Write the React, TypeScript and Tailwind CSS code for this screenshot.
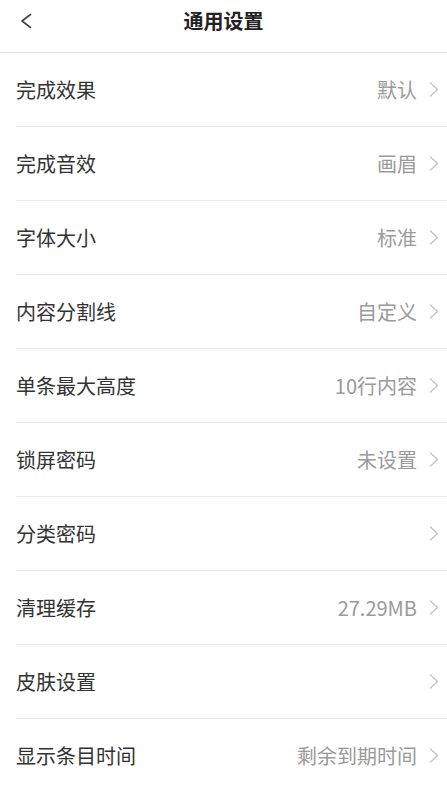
const rows: { label: string; value: string }[] = [
  { label: "完成效果", value: "默认" },
  { label: "完成音效", value: "画眉" },
  { label: "字体大小", value: "标准" },
  { label: "内容分割线", value: "自定义" },
  { label: "单条最大高度", value: "10行内容" },
  { label: "锁屏密码", value: "未设置" },
  { label: "分类密码", value: "" },
  { label: "清理缓存", value: "27.29MB" },
  { label: "皮肤设置", value: "" },
  { label: "显示条目时间", value: "剩余到期时间" },
];

function Chevron({ className }: { className?: string }) {
  return (
    <svg width="10" height="15" viewBox="0 0 10 15" fill="none" className={className}>
      <path d="M1.5 1L8.5 7.5L1.5 14" stroke="currentColor" strokeWidth="1.4" strokeLinecap="round" strokeLinejoin="round" />
    </svg>
  );
}

export default function App() {
  return (
    <div
      className="w-[447px] h-[787px] overflow-hidden bg-white text-[#333333]"
      style={{ fontFamily: '"Noto Sans CJK SC", "Noto Sans", sans-serif' }}
    >
      <header className="relative h-[53px] border-b border-[#e5e5e5] flex items-center justify-center">
        <button className="absolute left-[19px] top-[13px] text-[#444444]">
          <svg width="14" height="16" viewBox="0 0 14 16" fill="none">
            <path d="M11.5 1.5L3 8L11.5 14.5" stroke="currentColor" strokeWidth="1.6" strokeLinecap="round" strokeLinejoin="round" />
          </svg>
        </button>
        <h1 className="text-[20px] font-bold text-[#222222] -mt-[11px]">通用设置</h1>
      </header>
      <ul className="pl-[16px]">
        {rows.map((r) => (
          <li
            key={r.label}
            className="h-[74px] flex items-center justify-between pr-[8px] border-b border-[#ececec]"
          >
            <span className="text-[20px] leading-none">{r.label}</span>
            <span className="flex items-center gap-[12px]">
              {r.value && <span className="text-[20px] leading-none text-[#9a9a9a]">{r.value}</span>}
              <Chevron className="text-[#c4c4c4]" />
            </span>
          </li>
        ))}
      </ul>
    </div>
  );
}
